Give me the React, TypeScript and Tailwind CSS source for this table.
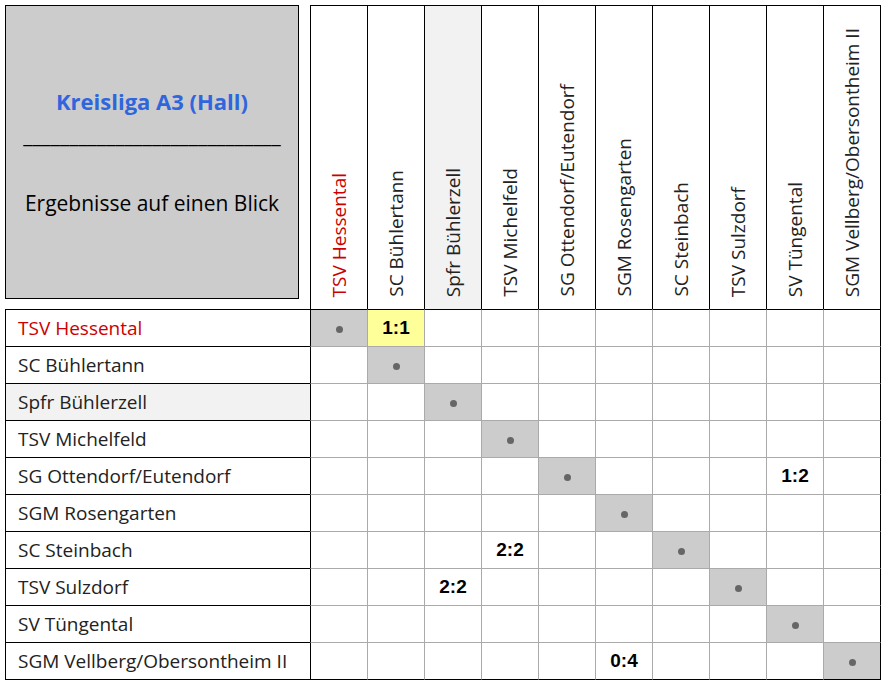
import React from 'react';

const TEAMS = [
  'TSV Hessental',
  'SC Bühlertann',
  'Spfr Bühlerzell',
  'TSV Michelfeld',
  'SG Ottendorf/Eutendorf',
  'SGM Rosengarten',
  'SC Steinbach',
  'TSV Sulzdorf',
  'SV Tüngental',
  'SGM Vellberg/Obersontheim II',
];

// results keyed by "row-col" (home row, away column)
const RESULTS: Record<string, { score: string; mark?: boolean }> = {
  '0-1': { score: '1:1', mark: true },
  '4-8': { score: '1:2' },
  '6-3': { score: '2:2' },
  '7-2': { score: '2:2' },
  '9-5': { score: '0:4' },
};

const HOME = 0;
const SHADED = 2;

const App: React.FC = () => {
  const last = TEAMS.length - 1;

  return (
    <div className="min-h-screen bg-white pl-[5px] pt-[5px] font-['Open_Sans',sans-serif] text-[#222]">
      <div className="grid grid-cols-[305px_repeat(9,57px)_58px] grid-rows-[304px_repeat(9,37px)_38px]">
        {/* title box */}
        <div>
          <div className="flex h-[294px] w-[294px] flex-col items-center justify-center border border-black bg-[#cccccc] text-center">
            <div className="text-[22px] font-bold leading-[34px] text-[#2f66dd]">Kreisliga A3 (Hall)</div>
            <div className="text-[21px] leading-[34px] text-black">____________________________</div>
            <div className="h-[34px]" />
            <div className="text-[21px] leading-[34px] text-black">Ergebnisse auf einen Blick</div>
          </div>
        </div>

        {/* column headers */}
        {TEAMS.map((t, j) => (
          <div
            key={t}
            className={`flex items-end justify-center border-l border-t border-black pb-[12px] ${
              j === last ? 'border-r' : ''
            } ${j === SHADED ? 'bg-[#f2f2f2]' : 'bg-white'}`}
          >
            <span
              className={`rotate-180 text-[19px] leading-none whitespace-nowrap [writing-mode:vertical-rl] ${
                j === HOME ? 'text-[#cc0000]' : 'text-[#222]'
              }`}
            >
              {t}
            </span>
          </div>
        ))}

        {/* rows */}
        {TEAMS.map((t, i) => (
          <React.Fragment key={t}>
            <div
              className={`flex items-center border-l border-t border-black pl-[12px] text-[19px] ${
                i === last ? 'border-b' : ''
              } ${i === SHADED ? 'bg-[#f2f2f2]' : 'bg-white'} ${
                i === HOME ? 'text-[#cc0000]' : 'text-[#222]'
              }`}
            >
              {t}
            </div>
            {TEAMS.map((_, j) => {
              const res = RESULTS[`${i}-${j}`];
              const diag = i === j;
              return (
                <div
                  key={j}
                  className={`flex items-center justify-center border-l border-t ${
                    i === 0 ? 'border-t-black' : 'border-t-[#aaaaaa]'
                  } ${j === 0 ? 'border-l-black' : 'border-l-[#aaaaaa]'} ${
                    j === last ? 'border-r border-r-black' : ''
                  } ${i === last ? 'border-b border-b-black' : ''} ${
                    diag ? 'bg-[#cccccc]' : res?.mark ? 'bg-[#ffff99]' : 'bg-white'
                  }`}
                >
                  {diag && <span className="mt-[3px] h-[7px] w-[7px] rounded-full bg-[#666666]" />}
                  {res && (
                    <span className="font-['Liberation_Sans',Arial,sans-serif] text-[19px] font-bold text-black">
                      {res.score}
                    </span>
                  )}
                </div>
              );
            })}
          </React.Fragment>
        ))}
      </div>
    </div>
  );
};

export default App;
